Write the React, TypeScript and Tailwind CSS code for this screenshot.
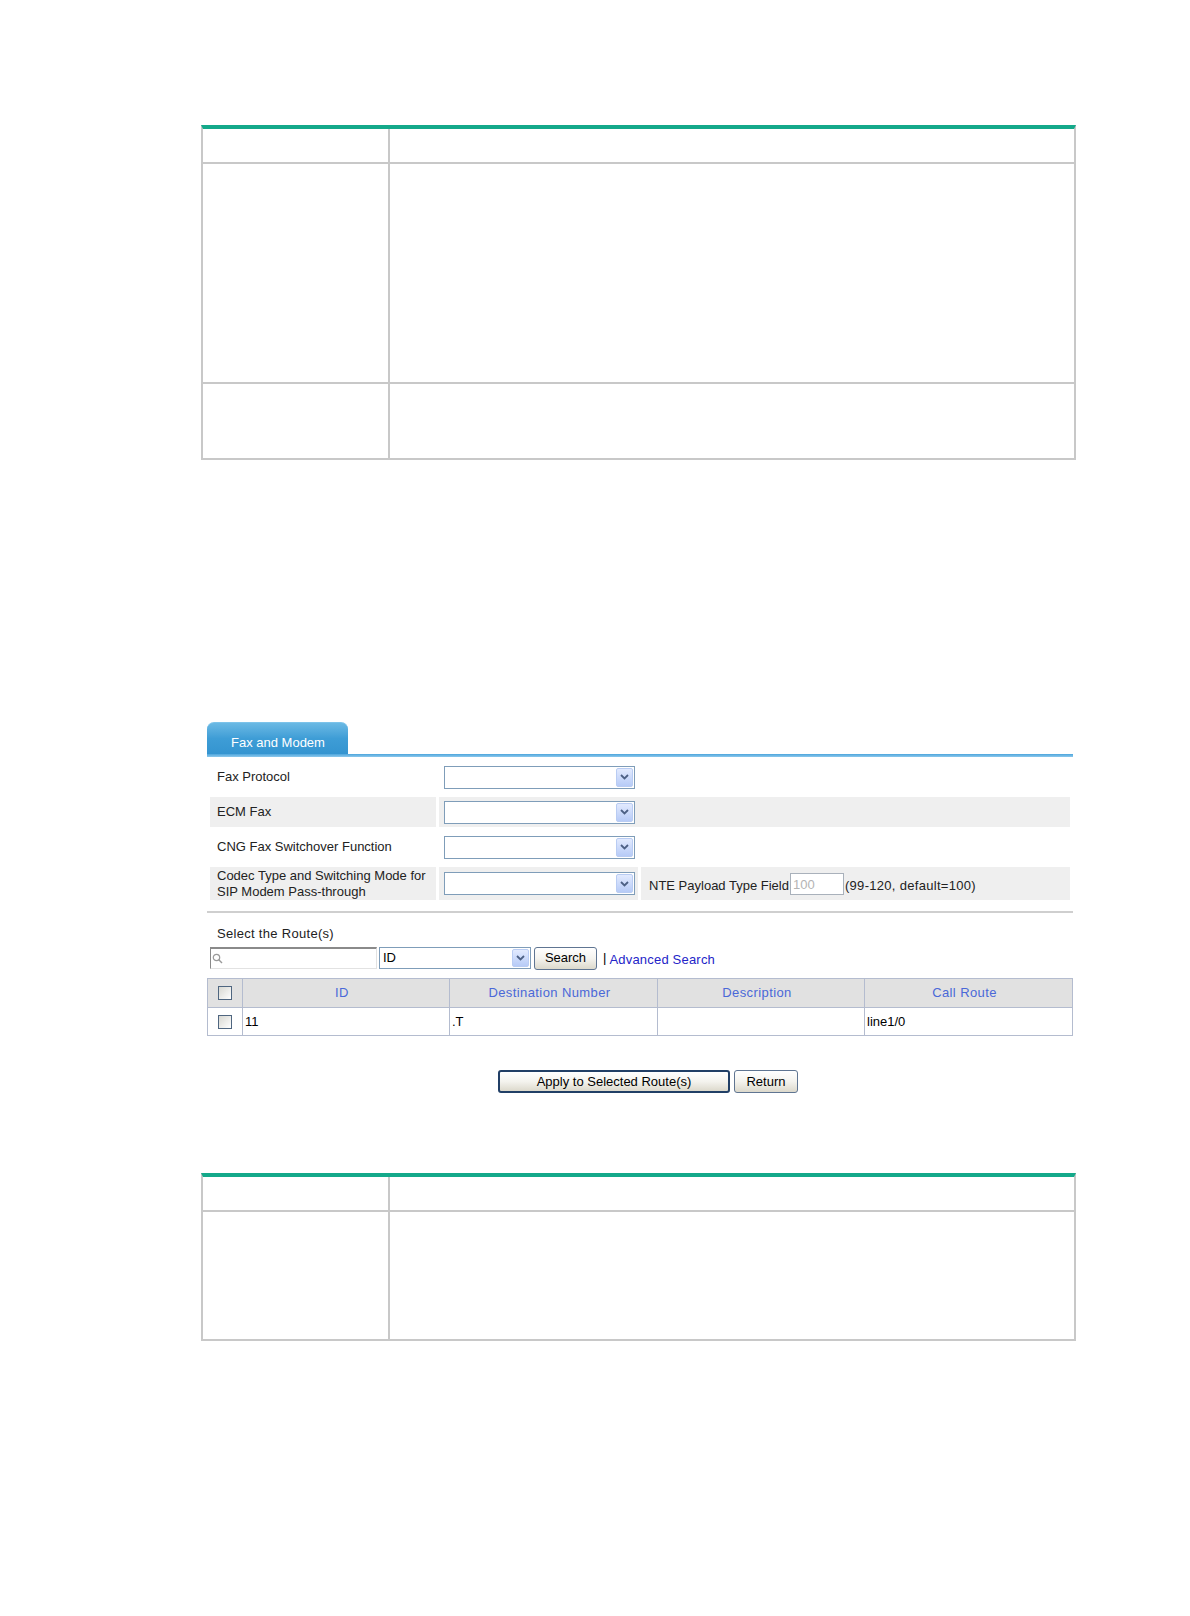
import React from "react";

function DocTable({ rowHeights }: { rowHeights: number[] }) {
  return (
    <div className="ml-[201px] w-[875px] border-x-2 border-b-2 border-t-4 border-[#c8c8c8] border-t-[#14a98a]">
      <div className="flex h-[35px] border-b-2 border-[#c8c8c8]">
        <div className="w-[187px] border-r-2 border-[#c8c8c8]" />
        <div className="flex-1" />
      </div>
      {rowHeights.map((h, i) => (
        <div
          key={i}
          className={`flex ${i < rowHeights.length - 1 ? "border-b-2 border-[#c8c8c8]" : ""}`}
          style={{ height: h }}
        >
          <div className="w-[187px] border-r-2 border-[#c8c8c8]" />
          <div className="flex-1" />
        </div>
      ))}
    </div>
  );
}

function Chevron() {
  return (
    <svg width="9" height="6" viewBox="0 0 9 6">
      <path d="M1 1 L4.5 4.5 L8 1" fill="none" stroke="#4d6185" strokeWidth="1.8" />
    </svg>
  );
}

function DropDown({ width, height, value }: { width: string; height: string; value?: string }) {
  return (
    <div className={`flex ${width} ${height} items-stretch border border-[#7f9db9] bg-white`}>
      <div className="flex flex-1 items-center pl-[3px] text-[13px] text-black">{value}</div>
      <div className="m-[1px] flex w-[17px] items-center justify-center rounded-[2px] border border-[#b9ccf3] bg-gradient-to-b from-[#e2eafe] to-[#b7cbf7]">
        <Chevron />
      </div>
    </div>
  );
}

function CheckBox() {
  return (
    <div className="h-[14px] w-[14px] border border-[#4f6680] bg-gradient-to-br from-[#d8d8d2] to-white" />
  );
}

function FormRow({
  label,
  gray,
  tall,
  extra,
}: {
  label: React.ReactNode;
  gray?: boolean;
  tall?: boolean;
  extra?: boolean;
}) {
  const bg = gray ? "bg-[#efefef]" : "bg-white";
  return (
    <div className={`flex gap-[3px] ${tall ? "h-[33px]" : "h-[30px]"}`}>
      <div className={`flex w-[226px] items-center pl-[7px] leading-[16px] ${bg}`}>{label}</div>
      <div className={`flex items-center pl-[5px] ${extra ? "w-[199px]" : "flex-1"} ${bg}`}>
        <DropDown width="w-[191px]" height="h-[23px]" />
      </div>
      {extra ? (
        <div className={`flex flex-1 items-center pl-[8px] ${bg}`}>
          <span className="pt-[5px]">NTE Payload Type Field</span>
          <div className="ml-[1px] flex h-[22px] w-[54px] items-start border border-[#a9b1bb] bg-white pl-[2px] pt-[1px] text-[#b4b4b4]">
            100
          </div>
          <span className="ml-[1px] pt-[5px] tracking-[0.3px]">(99-120, default=100)</span>
        </div>
      ) : null}
    </div>
  );
}

function XpButton({ label, width, strong }: { label: string; width: string; strong?: boolean }) {
  return (
    <div
      className={`flex h-[23px] ${width} items-center justify-center rounded-[3px] bg-gradient-to-b from-white via-[#f4f3ee] to-[#dcd9cc] text-black ${
        strong ? "border-2 border-[#213f66]" : "border border-[#5f7592]"
      }`}
    >
      {label}
    </div>
  );
}

function FaxModemForm() {
  return (
    <div className="ml-[207px] mt-[262px] w-[866px]">
      <div className="flex h-[32px] items-end">
        <div className="flex h-[32px] w-[141px] items-center rounded-t-[7px] border-t border-[#7cc3ea] bg-gradient-to-b from-[#6ab9e4] via-[#3e9dd6] to-[#3494d0] pl-[24px] pt-[8px] text-white">
          Fax and Modem
        </div>
      </div>
      <div className="h-[3px] bg-gradient-to-b from-[#4aa5dc] to-[#8cc8ec]" />

      <div className="flex flex-col gap-[5px] px-[3px] pt-[5px]">
        <FormRow label="Fax Protocol" />
        <FormRow label="ECM Fax" gray />
        <FormRow label="CNG Fax Switchover Function" />
        <FormRow
          label={
            <span>
              Codec Type and Switching Mode for
              <br />
              SIP Modem Pass-through
            </span>
          }
          gray
          tall
          extra
        />
      </div>

      <div className="mt-[11px] h-[2px] bg-[#cfcfcf]" />

      <div className="mt-[13px] pl-[10px] leading-[16px] tracking-[0.3px]">Select the Route(s)</div>

      <div className="mt-[5px] flex h-[22px] items-center">
        <div className="ml-[3px] flex h-[22px] w-[167px] items-center border border-[#e2e2e2] border-l-[#8a8a8a] border-t-2 border-t-[#8a8a8a] bg-white pl-[1px]">
          <svg width="11" height="11" viewBox="0 0 11 11">
            <circle cx="4.5" cy="4.5" r="3.2" fill="none" stroke="#9a9a9a" strokeWidth="1.2" />
            <path d="M6.8 6.8 L10 10" stroke="#9a9a9a" strokeWidth="1.4" />
          </svg>
        </div>
        <div className="ml-[2px]">
          <DropDown width="w-[152px]" height="h-[22px]" value="ID" />
        </div>
        <div className="ml-[3px]">
          <XpButton label="Search" width="w-[63px]" />
        </div>
        <span className="ml-[6px] text-black">|</span>
        <span className="ml-[3px] pt-[4px] tracking-[0.2px] text-[#2424c8]">Advanced Search</span>
      </div>

      <table className="mt-[9px] w-[866px] table-fixed border-collapse border border-[#a6b0c8]">
        <colgroup>
          <col className="w-[35px]" />
          <col className="w-[207px]" />
          <col className="w-[208px]" />
          <col className="w-[207px]" />
          <col />
        </colgroup>
        <thead>
          <tr className="h-[29px] bg-[#e1e1e1] tracking-[0.4px] text-[#4a68d8]">
            <th className="border border-[#b4bccf] font-normal">
              <div className="flex justify-center">
                <CheckBox />
              </div>
            </th>
            <th className="border border-[#b4bccf] pr-[8px] font-normal">ID</th>
            <th className="border border-[#b4bccf] pr-[8px] font-normal">Destination Number</th>
            <th className="border border-[#b4bccf] pr-[8px] font-normal">Description</th>
            <th className="border border-[#b4bccf] pr-[8px] font-normal">Call Route</th>
          </tr>
        </thead>
        <tbody>
          <tr className="h-[28px] bg-white text-black">
            <td className="border border-[#b4bccf]">
              <div className="flex justify-center">
                <CheckBox />
              </div>
            </td>
            <td className="border border-[#b4bccf] pl-[2px]">11</td>
            <td className="border border-[#b4bccf] pl-[2px]">.T</td>
            <td className="border border-[#b4bccf]" />
            <td className="border border-[#b4bccf] pl-[2px]">line1/0</td>
          </tr>
        </tbody>
      </table>

      <div className="mt-[34px] flex gap-[4px] pl-[291px]">
        <XpButton label="Apply to Selected Route(s)" width="w-[232px]" strong />
        <XpButton label="Return" width="w-[64px]" />
      </div>
    </div>
  );
}

export default function App() {
  return (
    <div className="min-h-[1616px] w-[1190px] bg-white font-['Liberation_Sans',Arial,sans-serif] text-[13px] text-[#222]">
      <div className="flex flex-col pt-[125px]">
        <DocTable rowHeights={[220, 74]} />
        <FaxModemForm />
        <div className="mt-[80px]">
          <DocTable rowHeights={[127]} />
        </div>
      </div>
    </div>
  );
}
